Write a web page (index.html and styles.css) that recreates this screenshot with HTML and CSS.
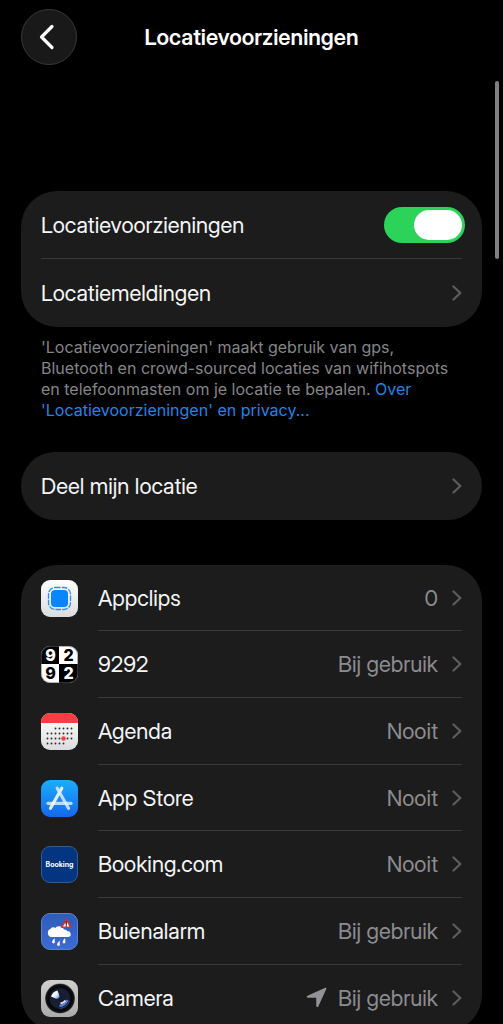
FILE: index.html
```html
<!DOCTYPE html>
<html lang="nl">
<head>
<meta charset="utf-8">
<meta name="viewport" content="width=device-width, initial-scale=1">
<title>Locatievoorzieningen</title>
<link rel="stylesheet" href="styles.css">
</head>
<body>
<svg class="defs" aria-hidden="true">
  <symbol id="chevron" viewBox="0 0 10 16"><path d="M1.500 1.500 8.300 8 1.500 14.500" fill="none" stroke="currentColor" stroke-width="2.300" stroke-linecap="round" stroke-linejoin="round"/></symbol>
</svg>
<div class="app">
  <header class="topbar">
    <button class="back" type="button" aria-label="Terug">
      <svg width="16" height="26" viewBox="0 0 16 26" aria-hidden="true"><path d="M13 2.500 2.500 13 13 23.500" fill="none" stroke="#fff" stroke-width="3.200" stroke-linecap="round" stroke-linejoin="round"/></svg>
    </button>
    <h1 class="title">Locatievoorzieningen</h1>
  </header>
  <div class="scrollbar" aria-hidden="true"></div>

  <main class="content">
    <section>
      <div class="card">
        <div class="row">
          <label class="name" for="location">Locatievoorzieningen</label>
          <input class="switch" id="location" type="checkbox" role="switch" checked>
        </div>
        <a class="row" href="#meldingen"><span class="name">Locatiemeldingen</span><svg class="chevron"><use href="#chevron"/></svg></a>
      </div>
      <p class="note">'Locatievoorzieningen' maakt gebruik van gps, Bluetooth en crowd-sourced locaties van wifihotspots en telefoonmasten om je locatie te bepalen. <a class="link" href="#privacy">Over 'Locatievoorzieningen' en privacy...</a></p>
    </section>

    <section class="card share">
      <a class="row" href="#deel"><span class="name">Deel mijn locatie</span><svg class="chevron"><use href="#chevron"/></svg></a>
    </section>

    <section class="card apps">
      <a class="app-row" href="#appclips">
        <svg class="icon" viewBox="0 0 37 37" aria-hidden="true">
          <defs><linearGradient id="clip" x2="0" y2="1"><stop stop-color="#fff"/><stop offset="1" stop-color="#dcdcde"/></linearGradient></defs>
          <rect width="37" height="37" rx="9" fill="url(#clip)"/>
          <rect x="10" y="10" width="17" height="17" rx="4" fill="#0a84ff"/>
          <rect x="7.500" y="7.500" width="22" height="22" rx="6.500" fill="none" stroke="#2492f5" stroke-width="1.300" stroke-dasharray="5.600 1.200"/>
        </svg>
        <span class="line"><span class="name">Appclips</span><span class="value">0</span><svg class="chevron"><use href="#chevron"/></svg></span>
      </a>
      <a class="app-row" href="#9292">
        <svg class="icon" viewBox="0 0 37 37" aria-hidden="true">
          <defs><clipPath id="tile"><rect width="37" height="37" rx="9"/></clipPath></defs>
          <g clip-path="url(#tile)"><rect width="37" height="37" fill="#fff"/><path d="M0 0h18v18H0zM18 18h19v19H18z" fill="#000"/></g>
          <rect x=".5" y=".5" width="36" height="36" rx="8.500" fill="none" stroke="#666" stroke-opacity=".5"/>
          <g class="digits"><text x="9.500" y="15" fill="#fff">9</text><text x="27.500" y="15">2</text><text x="9.500" y="33">9</text><text x="27.500" y="33" fill="#fff">2</text></g>
        </svg>
        <span class="line"><span class="name">9292</span><span class="value">Bij gebruik</span><svg class="chevron"><use href="#chevron"/></svg></span>
      </a>
      <a class="app-row" href="#agenda">
        <svg class="icon" viewBox="0 0 37 37" aria-hidden="true">
          <rect width="37" height="37" rx="9" fill="url(#clip)"/>
          <path d="M0 10V9a9 9 0 0 1 9-9h19a9 9 0 0 1 9 9v1z" fill="#fc3c44"/>
          <g fill="none" stroke="#2d2d2f" stroke-width="1.900" stroke-linecap="round"><path d="M14.500 15.500h16.500" stroke-dasharray="0 4"/><path d="M6.500 20.500h24.500M6.500 25.500h24.500" stroke-dasharray="0 4"/><path d="M6.500 30.500h16.500" stroke-dasharray="0 4"/></g>
          <circle cx="22.500" cy="25.500" r="2.200" fill="#fc3c44"/>
        </svg>
        <span class="line"><span class="name">Agenda</span><span class="value">Nooit</span><svg class="chevron"><use href="#chevron"/></svg></span>
      </a>
      <a class="app-row" href="#appstore">
        <svg class="icon" viewBox="0 0 37 37" aria-hidden="true">
          <defs><linearGradient id="store" x2="0" y2="1"><stop stop-color="#19aefb"/><stop offset="1" stop-color="#1767ed"/></linearGradient></defs>
          <rect width="37" height="37" rx="9" fill="url(#store)"/>
          <g fill="none" stroke-width="3.200" stroke-linecap="round"><path d="M7 23.300h23" stroke="#b5dcff"/><path d="M20.800 8.200 9.500 28.300" stroke="#f4faff" stroke-opacity=".9"/><path d="M16.200 8.200 27.500 28.300" stroke="#d8edff" stroke-opacity=".85"/></g>
        </svg>
        <span class="line"><span class="name">App Store</span><span class="value">Nooit</span><svg class="chevron"><use href="#chevron"/></svg></span>
      </a>
      <a class="app-row" href="#booking">
        <svg class="icon" viewBox="0 0 37 37" aria-hidden="true">
          <rect x=".5" y=".5" width="36" height="36" rx="8.500" fill="#043580" stroke="#315c94"/>
          <text class="booking" x="18.500" y="21">Booking</text>
        </svg>
        <span class="line"><span class="name">Booking.com</span><span class="value">Nooit</span><svg class="chevron"><use href="#chevron"/></svg></span>
      </a>
      <a class="app-row" href="#buienalarm">
        <svg class="icon" viewBox="0 0 37 37" aria-hidden="true">
          <defs><linearGradient id="rain" x2="0" y2="1"><stop stop-color="#2f5cb8"/><stop offset="1" stop-color="#3c6cd2"/></linearGradient></defs>
          <rect x=".5" y=".5" width="36" height="36" rx="8.500" fill="url(#rain)" stroke="#5b82cc"/>
          <path d="M10.500 24a4.300 4.300 0 0 1-.8-8.300 3.600 3.600 0 0 1 4.600-.7 5.200 5.200 0 0 1 8.700 1.500 3.500 3.500 0 0 1 3.500 1.800A2.900 2.900 0 0 1 27.500 24z" fill="#fff"/>
          <path id="drop" d="M13.500 25c-1.200 1.700-2.400 2.800-2.400 4a1.400 1.400 0 0 0 2.800 0c0-1.100-.3-2.500-.4-4z" fill="#fff"/>
          <use href="#drop" x="5" y="2.500"/><use href="#drop" x="10.500"/>
          <path d="M25.500 6.500 30 14.500l-9.500-.5z" fill="#fff" stroke="#d52c35" stroke-width="1.700" stroke-linejoin="round"/>
          <path d="M25.200 9v2.500M25.200 12.800v.3" stroke="#222" stroke-width="1.300" stroke-linecap="round"/>
        </svg>
        <span class="line"><span class="name">Buienalarm</span><span class="value">Bij gebruik</span><svg class="chevron"><use href="#chevron"/></svg></span>
      </a>
      <a class="app-row" href="#camera">
        <svg class="icon" viewBox="0 0 37 37" aria-hidden="true">
          <defs>
            <linearGradient id="shell" x2="0" y2="1"><stop stop-color="#d0d0d0"/><stop offset="1" stop-color="#aaa"/></linearGradient>
            <radialGradient id="lens"><stop stop-color="#17192b"/><stop offset=".6" stop-color="#1a2036"/><stop offset=".78" stop-color="#050608"/><stop offset=".93" stop-color="#151517"/><stop offset="1" stop-color="#666"/></radialGradient>
            <linearGradient id="glint" x2="1" y2="1"><stop stop-color="#fff"/><stop offset=".6" stop-color="#e4edff"/><stop offset="1" stop-color="#416fc1"/></linearGradient>
          </defs>
          <rect width="37" height="37" rx="9" fill="url(#shell)"/>
          <circle cx="19" cy="18.500" r="15" fill="url(#lens)"/>
          <path d="M10 16.500c1-3.500 3.500-5.500 6.500-6l2 5.500c-.2 2.500-2 3-4 2.500z" fill="url(#glint)"/>
          <path d="M18.500 26c4-.5 6.500-2.500 8-6" fill="none" stroke="#5287dc" stroke-width="2"/>
          <path d="M19.500 23.500c2.500-.5 4-1.500 5-3" fill="none" stroke="#f0d9e9" stroke-width="2"/>
          <path d="M19 28.500c5-.8 8-3.500 9.500-7.500" fill="none" stroke="#394e88"/>
        </svg>
        <span class="line"><span class="name">Camera</span><svg class="arrow" viewBox="0 0 21 21" aria-label="Recent gebruikt"><path d="M19.300.8c.8-.3 1.400.3 1 1.100l-8 17.500c-.5 1.100-2 .9-2-.3l-.1-8.300-8.400-.1c-1.200 0-1.400-1.500-.3-2z" fill="currentColor"/></svg><span class="value">Bij gebruik</span><svg class="chevron"><use href="#chevron"/></svg></span>
      </a>
    </section>
  </main>
</div>
</body>
</html>
```
FILE: styles.css
```css
* {
  box-sizing: border-box;
}

body {
  margin: 0;
  background: #000;
  color: #f5f5f5;
  font-family: "Inter Display", Inter, "Liberation Sans", sans-serif;
  font-size: 22px;
  font-variation-settings: "opsz" 26;
  line-height: 28px;
}

a {
  color: inherit;
  text-decoration: none;
}

.defs {
  position: absolute;
  width: 0;
  height: 0;
}

.app {
  position: relative;
  height: 100vh;
  overflow: hidden;
}

.topbar {
  display: grid;
  grid-template-columns: 56px 1fr 56px;
  align-items: center;
  padding: 9px 21px 0;
}

.back {
  display: grid;
  place-items: center;
  width: 56px;
  height: 56px;
  padding: 0 4px 0 0;
  border: 1px solid #383838;
  border-radius: 50%;
  background: #191919;
}

.title {
  margin: 0;
  color: #fff;
  font-size: 22px;
  font-weight: 600;
  text-align: center;
}

.scrollbar {
  position: absolute;
  top: 81px;
  right: 4px;
  width: 4px;
  height: 178px;
  border-radius: 2px;
  background: #808080;
}

.content {
  padding: 126px 21px 0;
}

.card {
  overflow: hidden;
  border-radius: 36px;
  background: #1c1c1d;
}

.row {
  display: flex;
  align-items: center;
  height: 68px;
  margin: 0 20px;
}

.row:not(:last-child) {
  border-bottom: 1px solid #3a3a3c;
}

.name {
  flex: 1;
}

.chevron {
  flex: none;
  width: 10px;
  height: 16px;
  color: #5c5c5f;
}

.switch {
  appearance: none;
  display: flex;
  justify-content: flex-end;
  width: 81px;
  height: 36px;
  margin: 0 -3px 0 0;
  padding: 3px;
  border-radius: 18px;
  background: #2bd359;
}

.switch::before {
  content: "";
  width: 48px;
  height: 30px;
  border-radius: 15px;
  background: #fff;
}

.switch:not(:checked) {
  justify-content: flex-start;
  background: #39393d;
}

.note {
  margin: 10px 20px 0;
  color: #858589;
  font-family: Inter, "Liberation Sans", sans-serif;
  font-size: 16px;
  font-variation-settings: normal;
  font-optical-sizing: auto;
  line-height: 21px;
}

.link {
  color: #2583e8;
}

.share {
  margin-top: 31px;
}

.apps {
  display: grid;
  grid-auto-rows: 66px 67px 67px;
  margin-top: 45px;
}

.app-row {
  display: flex;
  align-items: center;
  gap: 20px;
  padding: 0 20px;
}

.icon {
  flex: none;
  width: 37px;
  height: 37px;
}

.line {
  display: flex;
  flex: 1;
  align-items: center;
  align-self: stretch;
  border-bottom: 1px solid #38383a;
}

.value {
  margin-right: 14px;
  color: #8c8c90;
}

.arrow {
  width: 21px;
  height: 21px;
  margin-right: 11px;
  color: #929296;
}

.digits {
  font: 800 16px Inter, sans-serif;
  text-anchor: middle;
}

.booking {
  fill: #fff;
  font: 700 7px Inter, sans-serif;
  text-anchor: middle;
}
```
